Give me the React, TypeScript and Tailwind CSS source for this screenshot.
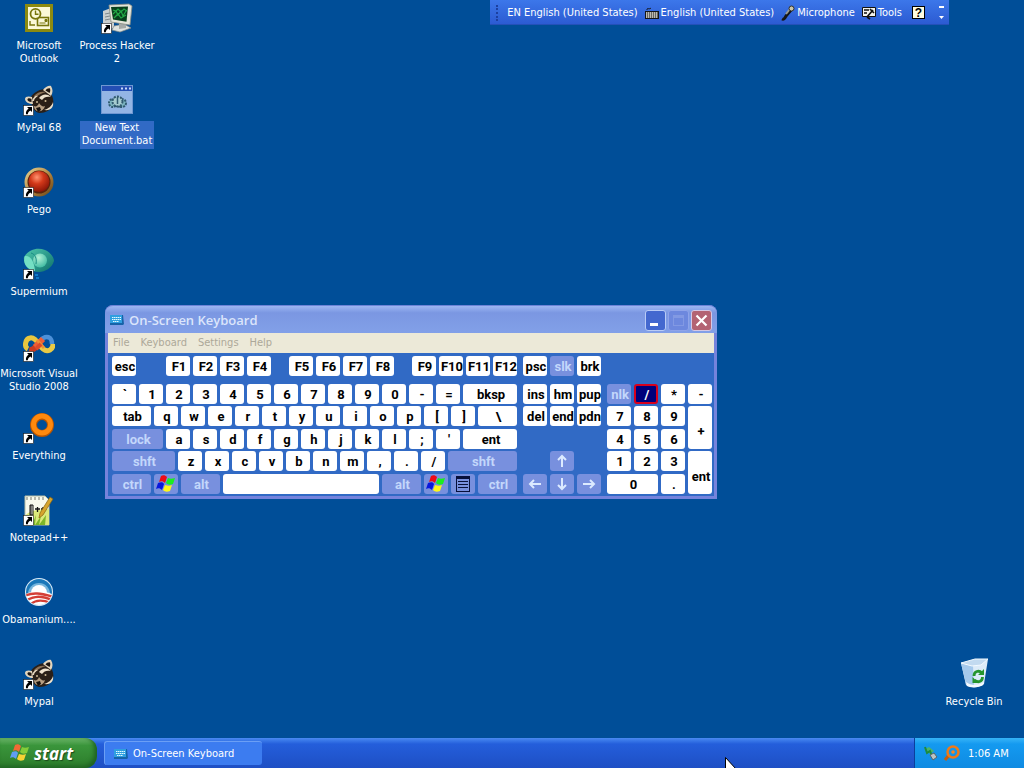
import type { ReactNode } from "react";

type KeyKind = "normal" | "dim" | "active";

type KeyDef = {
  label: ReactNode;
  name?: string;
  size?: string;
  kind?: KeyKind;
};

const KEY_STYLE: Record<KeyKind, string> = {
  normal: "bg-white text-black",
  dim: "bg-[#7890de] text-[#c3d7fb]",
  active: "border-2 border-[#d8001c] bg-[#00007b] text-white",
};

const W_UNIT = "w-6";
const W_TAB = "w-[39px]";
const W_WIDE = "w-[54px]";

/* ---------- icons ---------- */

function ShortcutArrow() {
  return (
    <svg className="absolute bottom-0 left-0" width="11" height="11" viewBox="0 0 11 11" aria-hidden>
      <rect x="0.5" y="0.5" width="10" height="10" fill="#fff" stroke="#1b1b1b" strokeWidth="0.6" />
      <path d="M4 2h5v5L7.4 5.4C5.8 6.3 5 7.4 4.8 9.3H3C2.6 7 3.6 5 5.6 3.6z" fill="#000" />
    </svg>
  );
}

function OutlookIcon() {
  return (
    <svg width="32" height="32" viewBox="0 0 32 32" aria-hidden>
      <rect x="2" y="2" width="28" height="28" fill="#8c8a10" />
      <rect x="5" y="5" width="22" height="22" fill="#faf8d8" />
      <rect x="14.5" y="15.5" width="11" height="8" fill="#faf8d8" stroke="#77750c" strokeWidth="1.6" />
      <path d="M22 17.5h2v2h-2zM16.5 21h6" stroke="#77750c" fill="#77750c" />
      <circle cx="12.5" cy="11.8" r="5" fill="#faf8d8" stroke="#77750c" strokeWidth="1.8" />
      <path d="M12.5 8.5v3.8h3M7 19v4h5" fill="none" stroke="#77750c" strokeWidth="1.4" />
    </svg>
  );
}

function ProcessHackerIcon() {
  return (
    <svg width="32" height="32" viewBox="0 0 32 32" aria-hidden>
      <path d="M2 9l8-3 3 2v18l-8 2-3-2z" fill="#c9cfd0" />
      <path d="M4 12l5-1M4 15l5-1M4 18l5-1" stroke="#7d898d" />
      <path d="M13 24l10-2 7 4-11 4-8-2z" fill="#dfe3df" stroke="#848b88" strokeWidth="0.7" />
      <path d="M18 20l7 1v5l-7 1z" fill="#a5aaa7" />
      <path d="M8 3l20-1 3 2-2 19-19-3z" fill="#e5e6da" stroke="#858b84" strokeWidth="0.8" />
      <path d="M10 5l17-.6-1.5 15.4L12 17.6z" fill="#08401d" />
      <path d="M12 8l3 1 2-2 3 3 3-3 3 2M12 12l3-3 2 4 3-4 2 5 3-5M13 16l4-4 3 4 5-3" stroke="#23a845" strokeWidth="1.2" fill="none" />
    </svg>
  );
}

function RaccoonIcon() {
  return (
    <svg width="32" height="32" viewBox="0 0 32 32" aria-hidden>
      {/* head, tilted to the right */}
      <path d="M8 13c2-4 7-7 13-8l6 3c3 4 4 9 3 13-2 5-8 8-13 8-5 0-9-5-9-16z" fill="#2a1f17" />
      {/* ears */}
      <path d="M20 6c2-3 6-5 8-4 2 3 2 7 0 10z" fill="#e3d5bd" />
      <path d="M22.5 6.5c1-1.500 3-2.500 4.500-2 .5 1.500.3 3-.5 4.500z" fill="#1f1611" />
      <path d="M10 20c-4 0-8-2-8-5 0-3 4-3 7-2z" fill="#e3d5bd" />
      <path d="M8.500 18c-2.500 0-4-1-4-2.500s2.500-1.500 4-.5z" fill="#1f1611" />
      {/* forehead fur */}
      <path d="M11 12c3-4 8-5 12-4-4 1-8 3-11 6z" fill="#8c7156" />
      <path d="M9 17c1-4 4-6 6-5-2 1-4 3-4 5z" fill="#e3d5bd" />
      <path d="M16 14c3-4 8-5 12-1-4-1-7 0-9 3z" fill="#eee2cd" />
      {/* muzzle and cheek */}
      <path d="M11 22c2 1 4 0 5-3 2 3 4 4 6 3-1 4-4 6-8 5-2-1-3-3-3-5z" fill="#b79f83" />
      <path d="M21 26c4-1 8-4 9-8 1 5-2 9-9 8z" fill="#eee2cd" />
      <path d="M13 24l4-1 1 3-3 2z" fill="#15100d" />
      <circle cx="14" cy="18" r="1" fill="#cdb893" />
      <circle cx="22.500" cy="17" r="1" fill="#cdb893" />
    </svg>
  );
}

function BatchIcon() {
  return (
    <svg width="32" height="32" viewBox="0 0 32 32" aria-hidden>
      <rect x="0.5" y="1.500" width="31" height="28" fill="#93b5e4" stroke="#6f97d2" />
      <rect x="1" y="2" width="30" height="5" fill="#244fb4" />
      <path d="M20 4.500h2M24 4.500h2M28 4.500h2" stroke="#c7d9f7" strokeWidth="2" />
      <circle cx="12" cy="19" r="4" fill="#7db6c0" stroke="#315b70" strokeWidth="2" strokeDasharray="2 1" />
      <circle cx="21" cy="19" r="4" fill="#7db6c0" stroke="#315b70" strokeWidth="2" strokeDasharray="2 1" />
      <circle cx="16.500" cy="17.500" r="5" fill="#a6ccd0" stroke="#315b70" strokeWidth="2" strokeDasharray="2 1.200" />
      <path d="M16.500 13v7M13 22l7 1" stroke="#315b70" strokeWidth="1.500" />
    </svg>
  );
}

function PegoIcon() {
  return (
    <svg width="32" height="32" viewBox="0 0 32 32" aria-hidden>
      <defs>
        <radialGradient id="pego" cx="0.4" cy="0.3" r="0.7">
          <stop offset="0" stopColor="#ff9370" />
          <stop offset="0.45" stopColor="#d3391a" />
          <stop offset="1" stopColor="#8d1708" />
        </radialGradient>
        <linearGradient id="pegoRing" x1="0" y1="0" x2="1" y2="1">
          <stop offset="0" stopColor="#ecd795" />
          <stop offset="0.6" stopColor="#a97b37" />
          <stop offset="1" stopColor="#5f3c13" />
        </linearGradient>
      </defs>
      <circle cx="16" cy="16" r="14.500" fill="url(#pegoRing)" />
      <circle cx="16" cy="16" r="11.500" fill="#59220d" />
      <circle cx="16" cy="15.500" r="10.500" fill="url(#pego)" />
    </svg>
  );
}

function SupermiumIcon() {
  return (
    <svg width="32" height="32" viewBox="0 0 32 32" aria-hidden>
      <defs>
        <linearGradient id="supermium" x1="0" y1="0" x2="1" y2="1">
          <stop offset="0" stopColor="#4fc9ad" />
          <stop offset="1" stopColor="#0c6f6b" />
        </linearGradient>
        <radialGradient id="supermiumBall" cx="0.4" cy="0.3" r="0.8">
          <stop offset="0" stopColor="#b2f2d6" />
          <stop offset="1" stopColor="#35b59d" />
        </radialGradient>
      </defs>
      <path d="M1 9C6 1 15-1 22 2c5 2 9 7 9 11-2 7-9 11-15 11C7 24 0 18 1 9z" fill="url(#supermium)" />
      <circle cx="17" cy="12.500" r="7" fill="url(#supermiumBall)" />
      <path d="M2 8c5-1 9 4 10 15C5 22-1 16 2 8z" fill="#74dfc4" />
      <path d="M8 5c4 1 6 5 5 11" stroke="#188c83" fill="none" />
      <path d="M12 27h3M13 30h3" stroke="#1586d8" strokeWidth="1.500" />
    </svg>
  );
}

function VisualStudioIcon() {
  return (
    <svg width="32" height="32" viewBox="0 0 32 32" fill="none" aria-hidden>
      <path d="M17 16c-3-5-6-9-10-8-5 1-6 9-2 11" stroke="#e8c63f" strokeWidth="5" />
      <path d="M17 11c3-4 7-5 10-3 2 2 2 4 2 6" stroke="#4c90d8" strokeWidth="4.500" />
      <path d="M16 14c3 5 7 8 11 6 2-1 3-3 3-6" stroke="#e9ca45" strokeWidth="5" />
      <path d="M6 20c5 1 8-5 11-8" stroke="#c93b21" strokeWidth="6" />
      <path d="M12 17l8-8" stroke="#ee5f35" strokeWidth="6" />
      <path d="M14 10l7 8" stroke="#ee8f35" strokeWidth="3" />
      <path d="M13 19l5-5" stroke="#dd4a2c" strokeWidth="4" />
    </svg>
  );
}

function EverythingIcon() {
  return (
    <svg width="32" height="32" viewBox="0 0 32 32" fill="none" aria-hidden>
      <circle cx="19" cy="13" r="8.500" stroke="#b95500" strokeWidth="7" />
      <circle cx="19" cy="12.500" r="8.500" stroke="#ff890d" strokeWidth="5" />
    </svg>
  );
}

function NotepadIcon() {
  return (
    <svg width="32" height="32" viewBox="0 0 32 32" aria-hidden>
      <path d="M2 2h20l4 4v25H2z" fill="#f8faed" stroke="#b6bca5" />
      <path d="M2 22c5-6 11-6 24-7v16H2z" fill="#dbe97b" />
      <path d="M4 31l4-7 1 7 4-10-1 10 6-9-2 9 7-10-1 10" fill="#7db628" />
      <path d="M8 11v10M7 11h3v10H7z" stroke="#111" fill="#eff1e8" />
      <path d="M12 15h5M14.500 13v5M18 15h4M20 13v4" stroke="#111" strokeWidth="1.300" />
      <path d="M27 3l3 2-10 16-4 3 1-5z" fill="#d6a52e" stroke="#866310" strokeWidth="0.700" />
      <path d="M4 3v3M8 3v3M12 3v3M16 3v3M20 3v3" stroke="#77796e" />
    </svg>
  );
}

function ObamaniumIcon() {
  return (
    <svg width="32" height="32" viewBox="0 0 32 32" aria-hidden>
      <defs>
        <clipPath id="disc">
          <circle cx="16" cy="16" r="13" />
        </clipPath>
      </defs>
      <circle cx="16" cy="16" r="14" fill="#dcecf8" />
      <g clipPath="url(#disc)">
        <path d="M0 0h32v20H0z" fill="#1977b9" />
        <path d="M5 18a11 11 0 0 1 22 0v14H5z" fill="#75b5dc" />
        <circle cx="16" cy="17" r="8" fill="#fff" />
        <path d="M0 19c10-5 22-4 32 0v13H0z" fill="#fff" />
        <path d="M1 20c9-4 16-3 30 1M2 25c10-6 17-5 27-1M6 29c8-6 14-5 22-2" fill="none" stroke="#d43f36" strokeWidth="2.400" />
      </g>
    </svg>
  );
}

function RecycleIcon() {
  return (
    <svg width="32" height="32" viewBox="0 0 32 32" aria-hidden>
      <path d="M3 5l11 2 16-6-4 25c-4 4-14 4-18 1z" fill="#dcebf8" />
      <path d="M3 5l12 3 1 21c-3 0-6-1-8-3z" fill="#a5c9ec" />
      <path d="M3 5l14-4 13 0-7 6-9 1z" fill="#c2daf0" stroke="#f2f9ff" strokeWidth="1" />
      <path d="M8 24c5 4 13 4 18 0l-1 3c-4 3-13 3-16 1z" fill="#f5faff" />
      <g fill="none" stroke="#25952d" strokeWidth="2.800">
        <path d="M16 18c0-5 5-6 8-3" />
        <path d="M24.500 19c0 5-5 6-8 3" />
      </g>
      <path d="M20 17h6v-6zM14.500 19v6h6z" fill="#25952d" />
    </svg>
  );
}

function Flag({ className, soft = false }: { className?: string; soft?: boolean }) {
  return (
    <svg className={className} viewBox="0 0 20 20" aria-hidden>
      <path d="M5 2c2-1 4-1 6 1L9 9C7 7 5 7 3 8z" fill={soft ? "#f06a35" : "#ef0c16"} />
      <path d="M12 4c2 1 4 1 7 0l-2 6c-3 1-5 1-7-1z" fill={soft ? "#84cc39" : "#19ef20"} />
      <path d="M2 9c3-1 5-1 6 1l-2 6c-2-2-4-2-6-1z" fill={soft ? "#609df2" : "#0918dd"} />
      <path d="M9 11c3 1 5 1 7 0l-2 6c-3 1-5 1-7-1z" fill={soft ? "#f7d234" : "#fff71b"} />
    </svg>
  );
}

function KeyboardIcon() {
  return (
    <svg width="16" height="16" viewBox="0 0 16 16" aria-hidden>
      <path d="M1 3h13l1 9-1 1H1z" fill="#1763a8" />
      <path d="M1 3h12v8H1z" fill="#2f9fe0" />
      <path d="M3 5.500h9M3 7.500h9M4 9.500h6" stroke="#e1faff" strokeDasharray="1.500 0.500" />
    </svg>
  );
}

function MenuKeyIcon() {
  return (
    <svg width="16" height="18" viewBox="0 0 16 18" fill="none" stroke="#07103a" aria-hidden>
      <rect x="1.500" y="1.500" width="13" height="15" />
      <path d="M2 3h12" strokeWidth="2" />
      <path d="M3 6.500h10M3 9.500h10M3 12.500h10" />
    </svg>
  );
}

function ArrowGlyph({ turn }: { turn: string }) {
  return (
    <svg className={turn} width="14" height="14" viewBox="0 0 14 14" fill="none" stroke="#dceaff" strokeWidth="2" aria-hidden>
      <path d="M7 13V2M3 6l4-4 4 4" />
    </svg>
  );
}

function LangKeyboardIcon() {
  return (
    <svg width="16" height="16" viewBox="0 0 16 16" aria-hidden>
      <path d="M3 5c0-3 2 0 4-2" stroke="#111" fill="none" />
      <rect x="1" y="6" width="14" height="8" fill="#161616" />
      <path d="M2 8h12M2 10h12M2 12h12" stroke="#f3f0e2" strokeWidth="1.300" strokeDasharray="1.500 0.500" />
    </svg>
  );
}

function MicIcon() {
  return (
    <svg width="16" height="16" viewBox="0 0 16 16" fill="none" aria-hidden>
      <path d="M2 14c2 1 3-1 4-3l5-6" stroke="#151515" strokeWidth="3" />
      <path d="M6 9l4-5" stroke="#9a9b91" strokeWidth="2" />
      <circle cx="11.500" cy="3.500" r="2.500" fill="#c8c6ac" stroke="#30302a" />
    </svg>
  );
}

function ToolsIcon() {
  return (
    <svg width="16" height="16" viewBox="0 0 16 16" aria-hidden>
      <path d="M1.500 2.500h13v9h-13z" fill="#f4f4ee" stroke="#111" />
      <path d="M3 5h5M3 8h3" stroke="#111" strokeWidth="1.500" />
      <path d="M6 12l6-7M9 4l4 4M6 12l3 2" stroke="#111" strokeWidth="1.700" />
    </svg>
  );
}

function TrayDeviceIcon() {
  return (
    <svg width="16" height="16" viewBox="0 0 16 16" aria-hidden>
      <path d="M2 4l4-2 5 4-4 3z" fill="#4bb46d" />
      <path d="M2 2l2 6 3-2 2 5" stroke="#1d8b3d" strokeWidth="2" fill="none" />
      <path d="M7 10l4-2 3 4-4 3z" fill="#bdc4c4" stroke="#596467" />
    </svg>
  );
}

function TraySearchIcon() {
  return (
    <svg width="17" height="16" viewBox="0 0 17 16" fill="none" aria-hidden>
      <path d="M6 10l-4 5" stroke="#c85d0a" strokeWidth="3" />
      <circle cx="10" cy="7" r="5.500" stroke="#ef7a17" strokeWidth="2.500" />
      <circle cx="10" cy="7" r="1.800" fill="#f78520" />
    </svg>
  );
}

/* ---------- desktop ---------- */

type Shortcut = {
  label: string;
  icon: ReactNode;
  link?: boolean;
  selected?: boolean;
};

const SHORTCUTS: Shortcut[] = [
  { label: "Microsoft Outlook", icon: <OutlookIcon /> },
  { label: "MyPal 68", icon: <RaccoonIcon />, link: true },
  { label: "Pego", icon: <PegoIcon />, link: true },
  { label: "Supermium", icon: <SupermiumIcon />, link: true },
  { label: "Microsoft Visual Studio 2008", icon: <VisualStudioIcon />, link: true },
  { label: "Everything", icon: <EverythingIcon />, link: true },
  { label: "Notepad++", icon: <NotepadIcon />, link: true },
  { label: "Obamanium....", icon: <ObamaniumIcon /> },
  { label: "Mypal", icon: <RaccoonIcon />, link: true },
  { label: "Process Hacker 2", icon: <ProcessHackerIcon />, link: true },
  { label: "New Text Document.bat", icon: <BatchIcon />, selected: true },
];

function DesktopIcon({ label, icon, link, selected }: Shortcut) {
  return (
    <button type="button" className="flex h-[82px] w-[78px] flex-col items-center gap-[5px] pt-0.5 text-white">
      <span className="relative block size-8 shrink-0">
        {icon}
        {link && <ShortcutArrow />}
      </span>
      <span className={`text-center leading-[13px] ${selected ? "w-[74px] bg-[#316ac5] pb-0.5" : "-mx-0.5"}`}>
        {label}
      </span>
    </button>
  );
}

/* ---------- on-screen keyboard ---------- */

function Key({ label, name, size = W_UNIT, kind = "normal" }: KeyDef) {
  return (
    <button
      type="button"
      aria-label={name}
      className={`flex h-5 shrink-0 items-center justify-center rounded-[3px] whitespace-nowrap ${
        typeof label === "string" ? "pt-px pl-0.5" : ""
      } ${size} ${KEY_STYLE[kind]}`}
    >
      {label}
    </button>
  );
}

const chars = (text: string): KeyDef[] => text.split(" ").map((label) => ({ label }));

const FUNCTION_GROUPS = ["F1 F2 F3 F4", "F5 F6 F7 F8", "F9 F10 F11 F12"];

const MAIN_ROWS: KeyDef[][] = [
  [...chars("` 1 2 3 4 5 6 7 8 9 0 - ="), { label: "bksp", size: W_WIDE }],
  [{ label: "tab", size: W_TAB }, ...chars("q w e r t y u i o p [ ]"), { label: "\\", size: W_TAB }],
  [{ label: "lock", size: "w-[51px]", kind: "dim" }, ...chars("a s d f g h j k l ; '"), { label: "ent", size: W_WIDE }],
  [
    { label: "shft", size: "w-[63px]", kind: "dim" },
    ...chars("z x c v b n m , . /"),
    { label: "shft", size: "w-[69px]", kind: "dim" },
  ],
  [
    { label: "ctrl", size: W_TAB, kind: "dim" },
    { label: <Flag className="size-5" />, name: "Left Windows", kind: "dim" },
    { label: "alt", size: W_TAB, kind: "dim" },
    { label: "", name: "Space", size: "w-[156px]" },
    { label: "alt", size: W_TAB, kind: "dim" },
    { label: <Flag className="size-5" />, name: "Right Windows", kind: "dim" },
    { label: <MenuKeyIcon />, name: "Menu", kind: "dim" },
    { label: "ctrl", size: W_TAB, kind: "dim" },
  ],
];

// Shared by the three key blocks so their rows stay level.
const KEY_GRID = "grid content-start gap-x-[3px] grid-rows-[28px_22px_23px_22px_23px_20px]";

function MainBlock() {
  return (
    <div className={KEY_GRID}>
      <div className="flex justify-between">
        <div className="flex gap-[30px]">
          <Key label="esc" />
          <div className="flex gap-[3px]">
            {chars(FUNCTION_GROUPS[0]!).map((k, i) => (
              <Key key={i} {...k} />
            ))}
          </div>
        </div>
        {FUNCTION_GROUPS.slice(1).map((group) => (
          <div key={group} className="flex gap-[3px]">
            {chars(group).map((k, i) => (
              <Key key={i} {...k} />
            ))}
          </div>
        ))}
      </div>
      {MAIN_ROWS.map((row, r) => (
        <div key={r} className="flex gap-[3px]">
          {row.map((k, i) => (
            <Key key={i} {...k} />
          ))}
        </div>
      ))}
    </div>
  );
}

function NavBlock() {
  return (
    <div className={`${KEY_GRID} grid-cols-[24px_24px_24px]`}>
      <Key label="psc" />
      <Key label="slk" kind="dim" />
      <Key label="brk" />
      {chars("ins hm pup del end pdn").map((k, i) => (
        <Key key={i} {...k} />
      ))}
      <div className="col-start-2 row-start-5">
        <Key label={<ArrowGlyph turn="" />} name="Up" kind="dim" />
      </div>
      <div className="col-span-3 row-start-6 flex gap-[3px]">
        <Key label={<ArrowGlyph turn="-rotate-90" />} name="Left" kind="dim" />
        <Key label={<ArrowGlyph turn="rotate-180" />} name="Down" kind="dim" />
        <Key label={<ArrowGlyph turn="rotate-90" />} name="Right" kind="dim" />
      </div>
    </div>
  );
}

const TALL_KEY =
  "col-start-4 flex h-[43px] w-6 items-center justify-center rounded-[3px] bg-white pt-2 pl-0.5 text-black";

function NumBlock() {
  return (
    <div className={`${KEY_GRID} grid-cols-[24px_24px_24px_24px]`}>
      <div className="col-span-4 row-start-2 flex gap-[3px]">
        <Key label="nlk" kind="dim" />
        <Key label="/" kind="active" />
        <Key label="*" />
        <Key label="-" />
      </div>
      <div className="col-span-3 row-start-3 flex gap-[3px]">
        {chars("7 8 9").map((k, i) => (
          <Key key={i} {...k} />
        ))}
      </div>
      <div className="col-span-3 row-start-4 flex gap-[3px]">
        {chars("4 5 6").map((k, i) => (
          <Key key={i} {...k} />
        ))}
      </div>
      <div className="col-span-3 row-start-5 flex gap-[3px]">
        {chars("1 2 3").map((k, i) => (
          <Key key={i} {...k} />
        ))}
      </div>
      <div className="col-span-3 row-start-6 flex gap-[3px]">
        <Key label="0" size="w-[51px]" />
        <Key label="." />
      </div>
      <button type="button" className={`${TALL_KEY} row-start-3`}>
        +
      </button>
      <button type="button" className={`${TALL_KEY} row-start-5`}>
        ent
      </button>
    </div>
  );
}

function KeyboardWindow() {
  return (
    <section
      aria-label="On-Screen Keyboard"
      className="absolute top-[305px] left-[105px] rounded-t-lg bg-[#7583dc] px-[3px] pb-[3px]"
    >
      <header className="-mx-[3px] flex h-7 items-center gap-1 rounded-t-lg border-t border-[#6c83d8] bg-linear-to-b from-[#9db6f2] via-[#7b97e2] via-25% to-[#82a0e8] pt-px pr-[5px] pl-1">
        <KeyboardIcon />
        <h1 className="flex-1 font-['Open_Sans',sans-serif] text-[13px] font-semibold text-[#dbe5fb]">
          On-Screen Keyboard
        </h1>
        <div className="flex gap-0.5">
          <button
            type="button"
            aria-label="Minimize"
            className="flex size-[21px] items-end rounded-[3px] border border-[#b9cbf6] bg-[#4368cf] p-1"
          >
            <span className="h-[3px] w-2 bg-white" />
          </button>
          <button
            type="button"
            aria-label="Maximize"
            disabled
            className="flex size-[21px] items-center justify-center rounded-[3px] border border-[#8fa4e9] bg-[#6d88de]"
          >
            <span className="size-[11px] border border-t-[3px] border-[#8299e3]" />
          </button>
          <button
            type="button"
            aria-label="Close"
            className="flex size-[21px] items-center justify-center rounded-[3px] border border-[#d4c8e5] bg-[#b36373]"
          >
            <svg width="13" height="13" viewBox="0 0 13 13" stroke="#fff" strokeWidth="2.200" aria-hidden>
              <path d="M1.500 1.500l10 10M11.500 1.500l-10 10" />
            </svg>
          </button>
        </div>
      </header>
      <nav className="flex h-5 items-center gap-[11px] bg-[#ece9d8] px-[5px] pb-0.5 text-[#aca899]">
        <button type="button">File</button>
        <button type="button">Keyboard</button>
        <button type="button">Settings</button>
        <button type="button">Help</button>
      </nav>
      <div className="flex gap-1.5 bg-[#316ac5] pt-[3px] pr-0.5 pb-0.5 pl-1 font-['Roboto',sans-serif] text-[13px] leading-4 font-bold">
        <MainBlock />
        <NavBlock />
        <NumBlock />
      </div>
    </section>
  );
}

function LanguageBar() {
  return (
    <div className="absolute top-0 right-[75px] flex h-[25px] items-center gap-1.5 border-b border-[#2450b8] bg-linear-to-b from-[#3c77ea] to-[#2c5bd2] pt-px pr-[5px] pl-1.5 text-white">
      <span className="mr-0.5 h-4 w-[3px] border-l-2 border-dotted border-[#1c40a0]" />
      <button type="button">EN English (United States)</button>
      <button type="button" className="flex items-center gap-px">
        <LangKeyboardIcon />
        English (United States)
      </button>
      <button type="button" className="flex items-center gap-px">
        <MicIcon />
        Microphone
      </button>
      <button type="button" className="flex items-center gap-px">
        <ToolsIcon />
        Tools
      </button>
      <button
        type="button"
        className="ml-1 flex size-[13px] items-center justify-center border border-black bg-[#fffce0] font-['Liberation_Sans',sans-serif] text-[12px] leading-3 font-bold text-black"
      >
        ?
      </button>
      <button type="button" aria-label="Options" className="ml-2 flex flex-col items-center gap-2">
        <span className="h-0.5 w-[5px] bg-white" />
        <svg width="5" height="3" viewBox="0 0 5 3" fill="#fff" aria-hidden>
          <path d="M0 0h5L2.500 3z" />
        </svg>
      </button>
    </div>
  );
}

function Taskbar() {
  return (
    <footer className="flex h-[30px] shrink-0 bg-linear-to-b from-[#4a8af2] via-[#245edb] via-20% to-[#1e4fc4] text-white">
      <button
        type="button"
        className="flex w-[97px] items-center gap-1 rounded-r-xl bg-linear-to-b from-[#69b468] via-[#3a953b] via-25% to-[#2c7c2b] pl-2.5 font-['Open_Sans',sans-serif] text-[17px] font-bold italic shadow-[inset_-3px_-2px_4px_#1f6322] text-shadow-[1px_1px_1px_#1b4a1b]"
      >
        <Flag soft className="size-5" />
        start
      </button>
      <button
        type="button"
        className="my-[3px] ml-[7px] flex w-[158px] items-center gap-1 rounded-[3px] border-t border-l border-[#6b9ff5] bg-[#3c7cf0] pl-2"
      >
        <KeyboardIcon />
        On-Screen Keyboard
      </button>
      <div className="ml-auto flex w-[110px] items-center gap-1 border-l border-[#0b3f9c] bg-linear-to-b from-[#35b4f7] via-[#149af0] via-20% to-[#0f8ae2] pl-2">
        <TrayDeviceIcon />
        <TraySearchIcon />
        <time className="ml-1">1:06 AM</time>
      </div>
    </footer>
  );
}

export default function App() {
  return (
    <div className="relative flex h-screen flex-col overflow-hidden bg-[#004e98] font-['DejaVu_Sans_Condensed','DejaVu_Sans',sans-serif] text-[11px] leading-[13px]">
      <main className="relative flex flex-1 justify-between">
        <div className="grid grid-flow-col grid-rows-[repeat(9,82px)] content-start">
          {SHORTCUTS.map((s) => (
            <DesktopIcon key={s.label} {...s} />
          ))}
        </div>
        <div className="mr-[11px] self-end">
          <DesktopIcon label="Recycle Bin" icon={<RecycleIcon />} />
        </div>
        <LanguageBar />
        <KeyboardWindow />
      </main>
      <Taskbar />
      <svg className="absolute top-[757px] left-[725px]" width="12" height="19" viewBox="0 0 12 19" aria-hidden>
        <path d="M0.500 0.500v15l3.500-3 2.500 6 2-1-2.500-5.500h5z" fill="#fff" stroke="#000" />
      </svg>
    </div>
  );
}
